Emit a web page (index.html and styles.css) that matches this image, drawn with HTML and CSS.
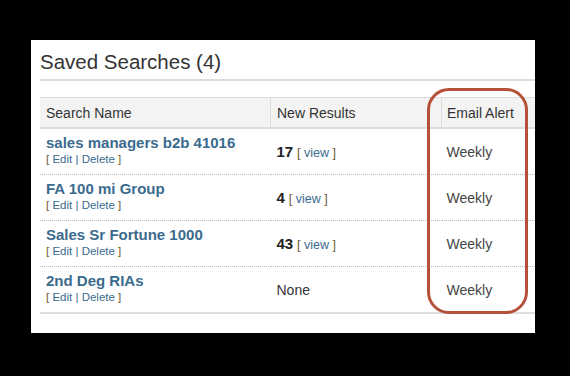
FILE: index.html
```html
<!DOCTYPE html>
<html>
<head>
<meta charset="utf-8">
<link rel="stylesheet" href="styles.css">
</head>
<body>
<div class="panel">
  <h1 class="title">Saved Searches (4)</h1>
  <div class="title-rule"></div>
  <table class="grid">
    <thead>
      <tr>
        <th class="c-name">Search Name</th>
        <th class="c-res">New Results</th>
        <th class="c-alert">Email Alert</th>
      </tr>
    </thead>
    <tbody>
      <tr>
        <td class="c-name"><a class="sname">sales managers b2b 41016</a><div class="acts"><span class="br">[</span> <a>Edit</a> | <a>Delete</a> <span class="br">]</span></div></td>
        <td class="c-res"><b>17</b> <span class="view"><span class="br">[</span> <a>view</a> <span class="br">]</span></span></td>
        <td class="c-alert">Weekly</td>
      </tr>
      <tr>
        <td class="c-name"><a class="sname">FA 100 mi Group</a><div class="acts"><span class="br">[</span> <a>Edit</a> | <a>Delete</a> <span class="br">]</span></div></td>
        <td class="c-res"><b>4</b> <span class="view"><span class="br">[</span> <a>view</a> <span class="br">]</span></span></td>
        <td class="c-alert">Weekly</td>
      </tr>
      <tr>
        <td class="c-name"><a class="sname">Sales Sr Fortune 1000</a><div class="acts"><span class="br">[</span> <a>Edit</a> | <a>Delete</a> <span class="br">]</span></div></td>
        <td class="c-res"><b>43</b> <span class="view"><span class="br">[</span> <a>view</a> <span class="br">]</span></span></td>
        <td class="c-alert">Weekly</td>
      </tr>
      <tr class="last">
        <td class="c-name"><a class="sname">2nd Deg RIAs</a><div class="acts"><span class="br">[</span> <a>Edit</a> | <a>Delete</a> <span class="br">]</span></div></td>
        <td class="c-res">None</td>
        <td class="c-alert">Weekly</td>
      </tr>
    </tbody>
  </table>
  <div class="circle"></div>
</div>
</body>
</html>
```
FILE: styles.css
```css
html, body {
  margin: 0;
  padding: 0;
  background: #000;
}
body {
  width: 570px;
  height: 376px;
  overflow: hidden;
  font-family: "Liberation Sans", Arial, sans-serif;
}
.panel {
  position: relative;
  margin: 40px 0 0 31px;
  width: 504px;
  height: 293px;
  background: #fff;
  padding-left: 9px;
  box-sizing: border-box;
}
.title {
  margin: 0;
  padding-top: 10px;
  height: 29px;
  font-size: 20.5px;
  font-weight: normal;
  color: #333;
  line-height: 24px;
}
.title-rule {
  height: 2px;
  background: #ddd;
  margin-bottom: 16px;
}
.grid {
  width: 495px;
  border-collapse: collapse;
  table-layout: fixed;
}
.grid th {
  background: #f3f3f3;
  height: 29px;
  padding: 0 0 0 6px;
  text-align: left;
  font-weight: normal;
  font-size: 14px;
  color: #333;
  border-top: 1px solid #ddd;
  border-bottom: 2px solid #ddd;
}
.grid th + th {
  border-left: 1px solid #ddd;
}
.grid th.c-alert { padding-left: 5px; }
.c-name { width: 224px; }
.c-res { width: 164px; }
.grid td {
  height: 45px;
  padding: 0 0 0 6px;
  vertical-align: middle;
  font-size: 14px;
  color: #333;
  border-bottom: 1px dotted #bbb;
}
.grid td.c-alert { padding-left: 5px; color: #444; }
.grid tr.last td {
  border-bottom: 2px solid #ddd;
}
.sname {
  display: block;
  font-weight: bold;
  font-size: 15px;
  color: #3b6b8e;
  margin-top: -3px;
  line-height: 18px;
}
.acts {
  font-size: 11.5px;
  color: #3b6b8e;
  line-height: 14px;
}
.acts a { color: #3b6b8e; }
.br { color: #6e5a32; }
.view {
  font-size: 12.5px;
  color: #3b6b8e;
}
.view a { color: #3b6b8e; }
.grid td b { color: #222; font-size: 15px; }
.circle {
  position: absolute;
  left: 396px;
  top: 48px;
  width: 101px;
  height: 226px;
  box-sizing: border-box;
  border: 3px solid #b5513a;
  border-radius: 22px;
}
```
